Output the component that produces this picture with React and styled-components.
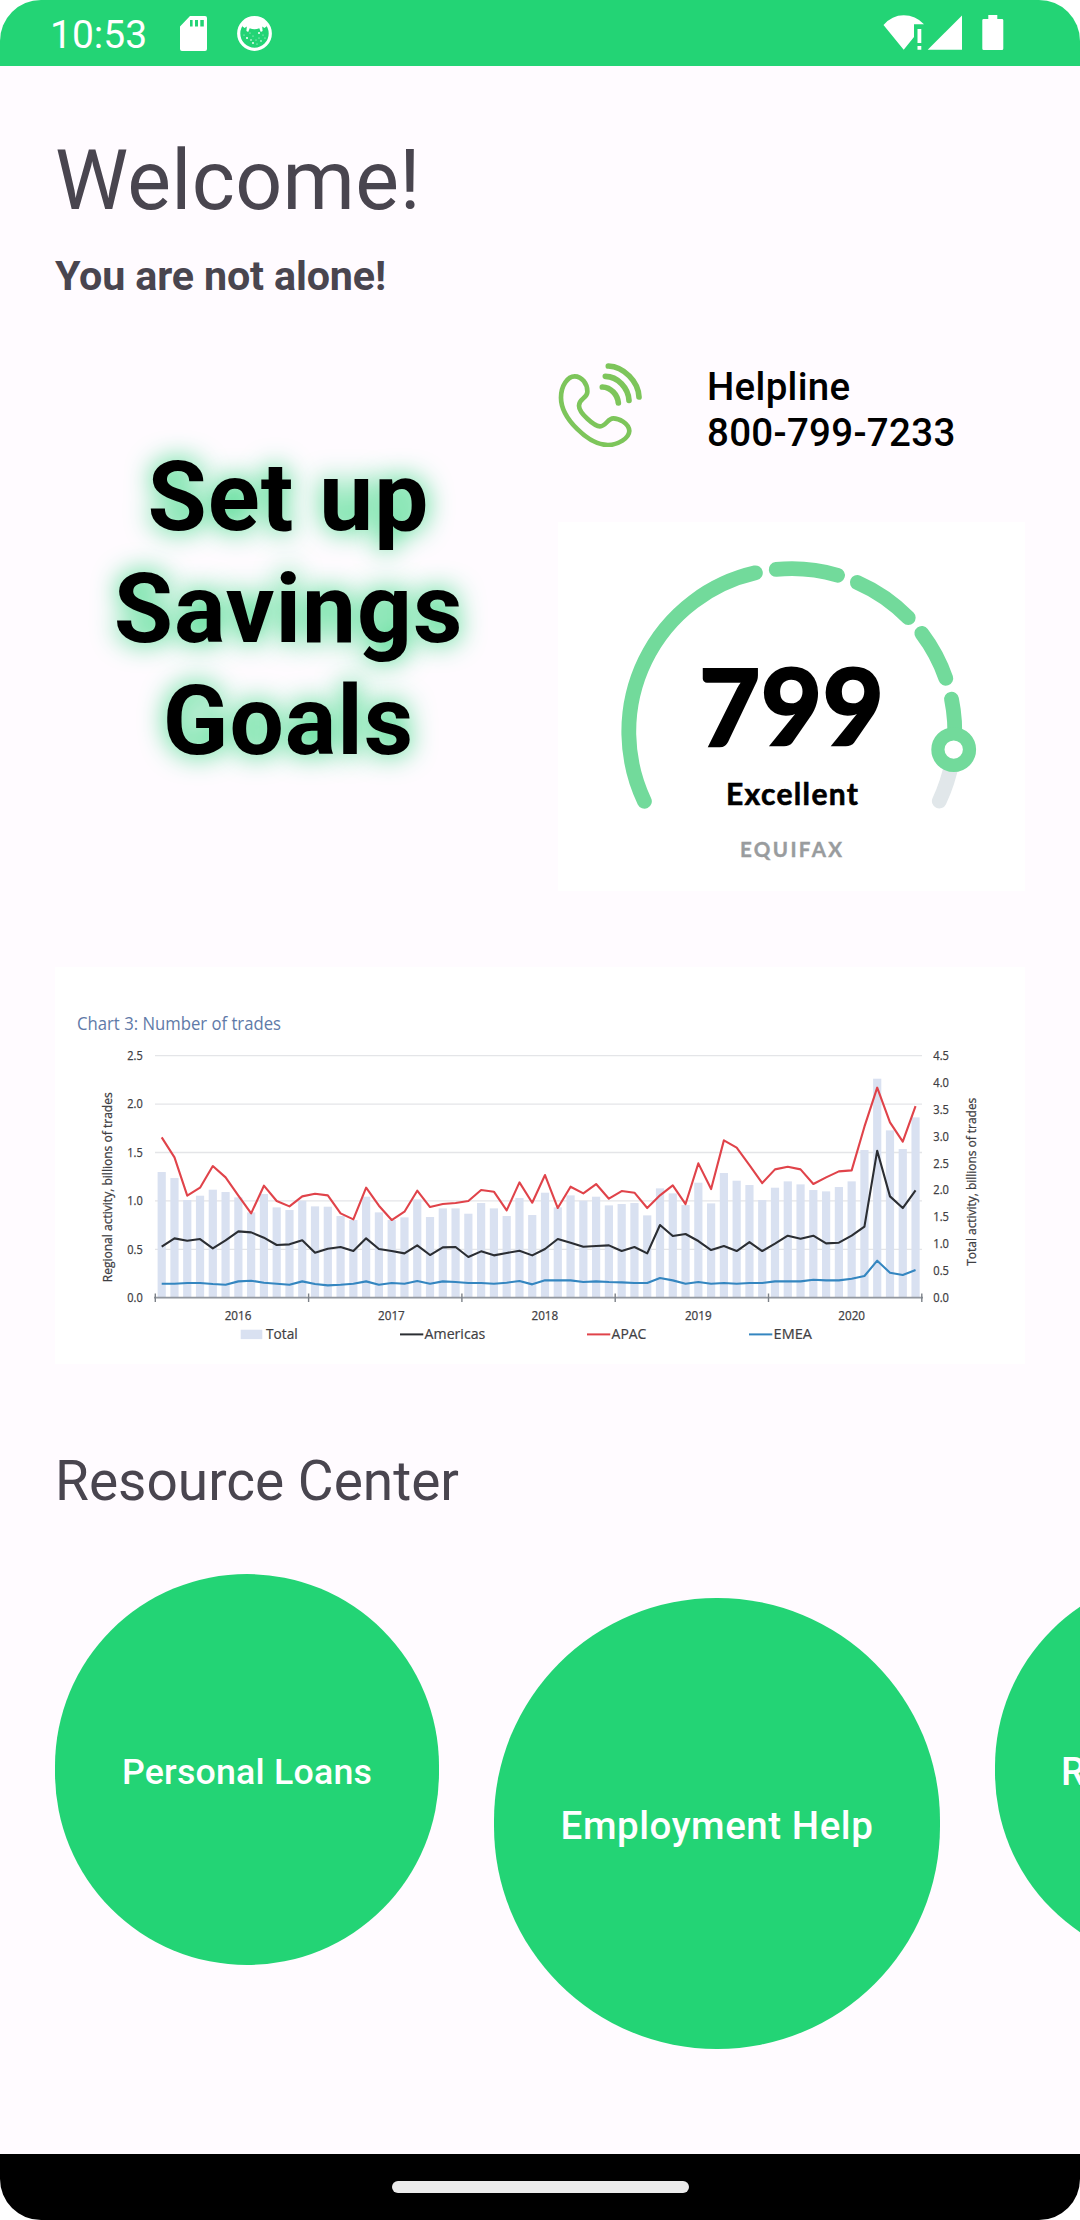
import styled, { createGlobalStyle } from "styled-components";

const apac = [
  481, 421, 306, 330, 395, 361, 306, 253, 336, 290, 274, 304, 312, 307, 253,
  235, 330, 276, 233, 258, 321, 272, 281, 284, 290, 323, 318, 262, 346, 285,
  368, 269, 333, 313, 341, 297, 320, 315, 269, 307, 337, 281, 403, 326, 472,
  450, 398, 344, 385, 393, 385, 341, 361, 379, 382, 513, 630, 526, 468, 575,
];
const americas = [
  153, 178, 171, 176, 148, 172, 199, 196, 180, 158, 160, 172, 135, 147, 152,
  140, 178, 146, 140, 133, 157, 128, 151, 152, 122, 139, 127, 134, 141, 127,
  146, 176, 165, 153, 155, 157, 140, 152, 133, 218, 185, 191, 170, 143, 155,
  140, 167, 140, 162, 186, 177, 186, 163, 165, 186, 213, 441, 304, 269, 322,
];
const emea = [
  42, 42, 44, 44, 41, 39, 49, 51, 45, 42, 39, 49, 41, 37, 39, 42, 49, 39, 44,
  42, 50, 42, 49, 47, 44, 44, 42, 45, 50, 40, 52, 52, 52, 47, 49, 47, 46, 44,
  44, 59, 52, 42, 47, 42, 44, 42, 44, 44, 49, 49, 49, 54, 52, 52, 57, 65, 111,
  75, 68, 83,
];
const total = [
  377, 359, 293, 306, 324, 317, 301, 256, 311, 271, 263, 291, 274, 273, 245,
  233, 303, 256, 233, 241, 295, 242, 268, 268, 252, 284, 268, 245, 299, 248,
  315, 271, 307, 291, 303, 277, 281, 284, 247, 328, 313, 278, 345, 283, 374,
  351, 338, 293, 330, 349, 340, 323, 319, 332, 349, 443, 657, 502, 446, 541,
];

// series are stored as heights over the axis, 3 units to a pixel
const BASE = 330.7;
const pointX = (i) => 106.7 + i * 12.777;
const pointY = (v) => BASE - v / 3;
const line = (data) => data.map((v, i) => `${pointX(i)},${pointY(v)}`).join(" ");

const leftTicks = ["0.0", "0.5", "1.0", "1.5", "2.0", "2.5"];
const rightTicks = ["0.0", "0.5", "1.0", "1.5", "2.0", "2.5", "3.0", "3.5", "4.0", "4.5"];
const years = ["2016", "2017", "2018", "2019", "2020"];
const legend = [
  { name: "Americas", color: "#2b2e33", x: 345, width: 60.7 },
  { name: "APAC", color: "#e0434a", x: 532, width: 34.7 },
  { name: "EMEA", color: "#3486c0", x: 694, width: 38.3 },
];

function TradesChart() {
  return (
    <svg width="970" height="397" viewBox="0 0 970 397">
      <ChartTitle x="22" y="63" textLength="204" lengthAdjust="spacingAndGlyphs">
        Chart 3: Number of trades
      </ChartTitle>
      {leftTicks.map((t, i) => (
        <g key={t}>
          <line x1="100" x2="867" y1={BASE - i * 48.4} y2={BASE - i * 48.4} stroke="#e4e5e8" strokeWidth="1.3" />
          <ChartLabel x="72.3" y={BASE - i * 48.4 + 4.3} textLength="15.4" lengthAdjust="spacingAndGlyphs">{t}</ChartLabel>
        </g>
      ))}
      {rightTicks.map((t, i) => (
        <ChartLabel key={t} x="878.3" y={BASE - i * 26.9 + 4.3} textLength="15.6" lengthAdjust="spacingAndGlyphs">{t}</ChartLabel>
      ))}
      {total.map((v, i) => (
        <rect key={i} x={pointX(i) - 4.1} y={pointY(v)} width="8.2" height={v / 3} fill="#d9e1f1" />
      ))}
      <line x1="99" x2="868" y1={BASE} y2={BASE} stroke="#92979f" strokeWidth="1.8" />
      {[0, 1, 2, 3, 4, 5].map((i) => (
        <line key={i} x1={100.3 + i * 153.3} x2={100.3 + i * 153.3} y1="326.5" y2="335" stroke="#7c8188" strokeWidth="1.4" />
      ))}
      <Series points={line(emea)} stroke="#3486c0" />
      <Series points={line(americas)} stroke="#2b2e33" />
      <Series points={line(apac)} stroke="#e0434a" />
      {years.map((year, i) => (
        <ChartLabel key={year} x={169.7 + i * 153.4} y="353.2" textLength="26.7" lengthAdjust="spacingAndGlyphs">{year}</ChartLabel>
      ))}
      <rect x="185.7" y="362.7" width="21.6" height="9.4" fill="#d9e1f1" />
      <LegendLabel x="211" y="372" textLength="31.7" lengthAdjust="spacingAndGlyphs">Total</LegendLabel>
      {legend.map((item) => (
        <g key={item.name}>
          <line x1={item.x} x2={item.x + 23.3} y1="367.4" y2="367.4" stroke={item.color} strokeWidth="2" />
          <LegendLabel x={item.x + 24.6} y="372" textLength={item.width} lengthAdjust="spacingAndGlyphs">
            {item.name}
          </LegendLabel>
        </g>
      ))}
      <ChartLabel transform="translate(56.5 315.3) rotate(-90)" textLength="190" lengthAdjust="spacingAndGlyphs">
        Regional activity, billions of trades
      </ChartLabel>
      <ChartLabel transform="translate(920.6 298.7) rotate(-90)" textLength="168" lengthAdjust="spacingAndGlyphs">
        Total activity, billions of trades
      </ChartLabel>
    </svg>
  );
}

const arcs = [
  [154.7, 257.1],
  [264.5, 286.3],
  [293.7, 315.6],
  [322.9, 340.9],
  [348.5, 364],
];

function arcPath(from, to) {
  const point = (deg) => {
    const a = (deg * Math.PI) / 180;
    return `${233.8 + 163 * Math.cos(a)} ${209.7 + 163 * Math.sin(a)}`;
  };
  return `M${point(from)} A163 163 0 0 1 ${point(to)}`;
}

function ScoreGauge() {
  return (
    <svg width="467" height="369" viewBox="0 0 467 369">
      <Arc d={arcPath(7, 25.2)} stroke="#e1e7ea" />
      {arcs.map(([from, to]) => (
        <Arc key={from} d={arcPath(from, to)} stroke="#72da9b" />
      ))}
      <circle cx="395.7" cy="227.6" r="15.8" fill="#fff" stroke="#72da9b" strokeWidth="13.2" />
      <Score x="141" y="224" textLength="185">799</Score>
      <Rating x="168" y="283" textLength="132">Excellent</Rating>
      <Bureau x="182" y="335" textLength="102">EQUIFAX</Bureau>
    </svg>
  );
}

function PhoneIcon() {
  return (
    <svg width="84" height="84" viewBox="0 0 250 252" fill="none" stroke="#7dc55b" strokeWidth="14" strokeLinecap="round">
      <path d="M87 87C88 62 70 40 49 40C28 40 8 68 8 104C8 165 90 246 149 246C180 246 212 225 213 204C212 180 180 166 165 166C148 166 143 190 125 190C108 190 62 150 62 128C62 106 87 106 87 87Z" />
      <path d="M150 9C196 11 240 55 242 102" strokeWidth="17" />
      <path d="M141 40C178 40 210 75 212 112" strokeWidth="17" />
      <path d="M132 72C158 73 178 95 180 120" strokeWidth="17" />
    </svg>
  );
}

function SdCardIcon() {
  return (
    <svg width="27" height="35" viewBox="0 0 27 35">
      <path
        fill="#fff"
        fillRule="evenodd"
        d="M10 0H25Q27 0 27 2V33Q27 35 25 35H2Q0 35 0 33V10.500ZM10 4V10.500H12.600V4ZM15 4V10.500H18V4ZM20.300 4V10.500H23.800V4Z"
      />
    </svg>
  );
}

function DebugIcon() {
  const dots = [
    [7, 19], [10, 22, 1], [13, 17], [16, 20], [19, 24], [22, 17, 1], [26, 19],
    [14, 24, 0.8], [16, 27, 0.9], [22, 22], [24, 25, 0.8], [20, 28], [28, 22],
  ];
  return (
    <svg width="35" height="35" viewBox="0 0 35 35">
      <circle cx="17.5" cy="17.5" r="15.8" fill="none" stroke="#fff" strokeWidth="3.2" />
      <path fill="#fff" d="M5 10Q8 2 17.500 2T30 10L27.500 12L25.200 10.500L25.600 15L23.800 16L22.300 12.200Q17.500 14.500 12.700 12.200L11.200 16L9.400 15L9.800 10.500L7.500 12Z" />
      {dots.map(([cx, cy, r = 0.5]) => (
        <circle key={`${cx}-${cy}`} cx={cx} cy={cy} r={r} fill="#fff" />
      ))}
    </svg>
  );
}

function SignalIcons() {
  return (
    <svg width="121" height="36" viewBox="0 0 121 36" fill="#fff">
      <path d="M0.500 10Q9 0.300 20.700 0.300T41 9.200H31V22L20.700 34.700Z" />
      <path d="M34.500 14H38.300V28H34.500ZM34.500 31H38.300V34.700H34.500Z" />
      <path d="M79 0.500V34.700H44.700Z" />
      <path d="M105.300 0H114.300V4H119Q120.300 4 120.300 5.300V33.500Q120.300 35 119 35H100.700Q99.300 35 99.300 33.500V5.300Q99.300 4 100.700 4H105.300Z" />
    </svg>
  );
}

function App() {
  return (
    <>
      <GlobalStyle />
      <Screen>
        <StatusBar>
          <StatusGroup>
            <Clock>10:53</Clock>
            <SdCardIcon />
            <DebugIcon />
          </StatusGroup>
          <SignalIcons />
        </StatusBar>
        <Content>
          <Title>Welcome!</Title>
          <Subtitle>You are not alone!</Subtitle>
          <Dashboard>
            <Goals>
              Set up
              <br />
              Savings
              <br />
              Goals
            </Goals>
            <div>
              <Helpline>
                <PhoneIcon />
                <HelplineText>
                  Helpline
                  <br />
                  800-799-7233
                </HelplineText>
              </Helpline>
              <Card>
                <ScoreGauge />
              </Card>
            </div>
          </Dashboard>
          <Card>
            <TradesChart />
          </Card>
          <SectionTitle>Resource Center</SectionTitle>
          <Resources>
            <Bubble $width={384} $height={391} $size={35.75} $spacing={0.2}>Personal Loans</Bubble>
            <Bubble $width={446} $height={451} $size={38.5} $spacing={0.55} $offset={24}>Employment Help</Bubble>
            <Bubble $width={440} $height={391} $size={38.5} $start>R</Bubble>
          </Resources>
        </Content>
        <NavBar>
          <Handle />
        </NavBar>
      </Screen>
    </>
  );
}

export default App;

const GlobalStyle = createGlobalStyle`
  * {
    box-sizing: border-box;
  }
  body {
    margin: 0;
    background: #fff;
    font-family: Roboto, sans-serif;
  }
  svg {
    display: block;
    flex-shrink: 0;
  }
`;
const Screen = styled.div`
  width: 1080px;
  height: 2220px;
  display: flex;
  flex-direction: column;
  overflow: hidden;
  border-radius: 41px;
  background: #fffbff;
  color: #49454f;
`;
const StatusBar = styled.header`
  height: 66px;
  flex-shrink: 0;
  display: flex;
  justify-content: space-between;
  align-items: flex-start;
  padding: 15px 76px 0 50px;
  background: #23d475;
`;
const StatusGroup = styled.div`
  display: flex;
  padding-top: 1px;
  svg + svg {
    margin-left: 30px;
  }
`;
const Clock = styled.span`
  width: 130px;
  font-size: 39px;
  line-height: 38px;
  color: #fff;
`;
const Content = styled.main`
  flex: 1;
  min-height: 0;
  padding: 66px 55px 0;
`;
const Title = styled.h1`
  margin: 0;
  font-size: 82.5px;
  font-weight: 400;
  line-height: 97px;
  letter-spacing: 0.3px;
`;
const Subtitle = styled.h2`
  margin: 23px 0 0;
  font-size: 41.25px;
  font-weight: 700;
  line-height: 48px;
  letter-spacing: -0.15px;
`;
const Dashboard = styled.section`
  display: grid;
  grid-template-columns: 467px 467px;
  gap: 36px;
  margin: 63px 0 76px;
`;
const Goals = styled.div`
  padding-top: 78px;
  font-size: 96.25px;
  font-weight: 700;
  line-height: 112px;
  letter-spacing: 1px;
  text-align: center;
  color: #000;
  text-shadow: 0 0 27px #23d475;
`;
const Helpline = styled.div`
  display: flex;
  gap: 65px;
  height: 159px;
`;
const HelplineText = styled.div`
  padding-top: 1px;
  font-size: 38.5px;
  font-weight: 500;
  line-height: 45.5px;
  letter-spacing: 0.3px;
  color: #000;
`;
const Card = styled.div`
  background: #fff;
`;
const SectionTitle = styled.h2`
  margin: 85px 0 60px;
  font-size: 55px;
  font-weight: 400;
  line-height: 64.5px;
`;
const Resources = styled.div`
  display: flex;
  align-items: flex-start;
  gap: 55px;
`;
const Bubble = styled.button`
  flex-shrink: 0;
  display: flex;
  align-items: center;
  justify-content: ${({ $start }) => ($start ? "flex-start" : "center")};
  width: ${({ $width }) => $width}px;
  height: ${({ $height }) => $height}px;
  margin: ${({ $offset = 0 }) => $offset}px 0 0;
  padding: 5px 66px 0;
  border: none;
  border-radius: ${({ $height }) => $height / 2 - 3}px;
  background: #23d475;
  color: #fff;
  font-family: inherit;
  font-size: ${({ $size }) => $size}px;
  font-weight: 500;
  letter-spacing: ${({ $spacing = 0 }) => $spacing}px;
  white-space: nowrap;
`;
const NavBar = styled.footer`
  height: 66px;
  flex-shrink: 0;
  display: flex;
  justify-content: center;
  padding-top: 27px;
  background: #000;
`;
const Handle = styled.div`
  width: 297px;
  height: 12px;
  border-radius: 6px;
  background: #ebebeb;
`;
const Arc = styled.path`
  fill: none;
  stroke-width: 14.8px;
  stroke-linecap: round;
`;
const Score = styled.text`
  font: 900 106px Lato, sans-serif;
  stroke: #000;
  stroke-width: 1.6px;
`;
const Rating = styled.text`
  font: 700 30px Lato, sans-serif;
  stroke: #000;
  stroke-width: 0.6px;
`;
const Bureau = styled.text`
  font: 700 20.5px Lato, sans-serif;
  fill: #999c9e;
  stroke: #999c9e;
  stroke-width: 0.4px;
`;
const Series = styled.polyline`
  fill: none;
  stroke-width: 2.1px;
  stroke-linejoin: round;
`;
const ChartTitle = styled.text`
  font: 400 17.5px "Open Sans", sans-serif;
  fill: #5f7aa8;
`;
const ChartLabel = styled.text`
  font: 400 12px "Open Sans", sans-serif;
  fill: #3f4043;
  stroke: #3f4043;
  stroke-width: 0.25px;
`;
const LegendLabel = styled.text`
  font: 400 14.5px "Open Sans", sans-serif;
  fill: #3f4043;
  stroke: #3f4043;
  stroke-width: 0.2px;
`;
